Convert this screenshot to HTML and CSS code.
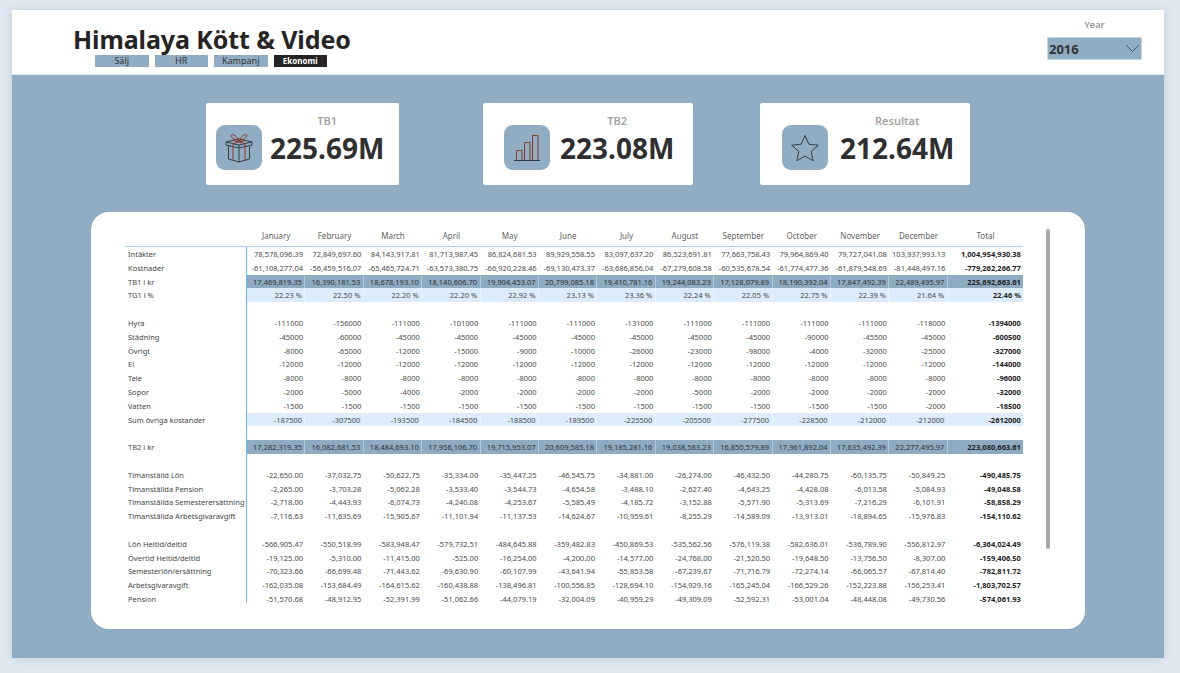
FILE: index.html
```html
<!DOCTYPE html>
<html lang="sv">
<head>
    <meta charset="UTF-8">
    <meta name="viewport" content="width=device-width, initial-scale=1.0">
    <title>Himalaya Kött &amp; Video</title>
    <link rel="stylesheet" href="styles.css">
</head>
<body>
    <div class="report">
        <header class="header">
            <div class="brand">
                <h1>Himalaya Kött &amp; Video</h1>
                <nav class="tabs">
                    <a class="tab">Sälj</a>
                    <a class="tab">HR</a>
                    <a class="tab">Kampanj</a>
                    <a class="tab active">Ekonomi</a>
                </nav>
            </div>
            <div class="slicer">
                <div class="slicer-label">Year</div>
                <div class="slicer-box">
                    <span>2016</span>
                    <svg width="15" height="9" viewBox="0 0 15 9"><path d="M1 1l6.500 6.500L14 1" fill="none" stroke="#3f5266" stroke-width="1"/></svg>
                </div>
            </div>
        </header>

        <main class="content">
            <section class="cards">
                <div class="card card-first">
                    <div class="card-icon">
                        <svg width="30" height="30" viewBox="0 0 30 30" fill="none" stroke="#333c46" stroke-width="1">
                            <path d="M2 9l13-3 13 3v3l-13 3-13-3zM2 9l13 3 13-3M15 12v3M4.500 12.500V26l10.500 3 10.500-3V12.500M15 15v14"/>
                            <path stroke="#8a3a2c" d="M9 10.500V27.500M21 10.500V27.500M9 10.500l12-3M21 10.500l-12-3M15 7.500C13 3.500 9 .5 7.500 2s2.500 5 7.500 5.500zM15 7.500c2-4 6-7 7.500-5.500s-2.500 5-7.500 5.500z"/>
                        </svg>
                    </div>
                    <div class="card-text">
                        <div class="card-label">TB1</div>
                        <div class="card-value">225.69M</div>
                    </div>
                </div>
                <div class="card card-second">
                    <div class="card-icon">
                        <svg width="30" height="30" viewBox="0 0 30 30" fill="none" stroke="#8a3a2c" stroke-width="1">
                            <path d="M4.500 27.500v-10h5.500v10M12.500 27.500v-18h5.500v18M20.500 27.500v-25h5.500v25"/>
                            <path stroke="#333c46" d="M2 27.500h26"/>
                        </svg>
                    </div>
                    <div class="card-text">
                        <div class="card-label">TB2</div>
                        <div class="card-value">223.08M</div>
                    </div>
                </div>
                <div class="card card-third">
                    <div class="card-icon">
                        <svg width="30" height="30" viewBox="0 0 30 30" fill="none" stroke="#333c46" stroke-width="1">
                            <path d="M15 2.500l3.800 8.700 9.500 1-7.100 6.300 2 9.300-8.200-4.800-8.200 4.800 2-9.300-7.100-6.300 9.500-1z"/>
                        </svg>
                    </div>
                    <div class="card-text">
                        <div class="card-label">Resultat</div>
                        <div class="card-value">212.64M</div>
                    </div>
                </div>
            </section>

            <section class="panel">
                <div class="table-clip">
                    <table class="matrix">
                        <thead>
                            <tr><th class="name"></th><th>January</th><th>February</th><th>March</th><th>April</th><th>May</th><th>June</th><th>July</th><th>August</th><th>September</th><th>October</th><th>November</th><th>December</th><th>Total</th></tr>
                        </thead>
                        <tbody>
                            <tr><td class="name">Intäkter</td><td>78,578,096.39</td><td>72,849,697.60</td><td>84,143,917.81</td><td>81,713,987.45</td><td>86,824,681.53</td><td>89,929,558.55</td><td>83,097,637.20</td><td>86,523,691.81</td><td>77,663,758.43</td><td>79,964,869.40</td><td>79,727,041.08</td><td>103,937,993.13</td><td class="total">1,004,954,930.38</td></tr>
                            <tr><td class="name">Kostnader</td><td>-61,108,277.04</td><td>-56,459,516.07</td><td>-65,465,724.71</td><td>-63,573,380.75</td><td>-66,920,228.46</td><td>-69,130,473.37</td><td>-63,686,856.04</td><td>-67,279,608.58</td><td>-60,535,678.54</td><td>-61,774,477.36</td><td>-61,879,548.69</td><td>-81,448,497.16</td><td class="total">-779,262,266.77</td></tr>
                            <tr class="dark"><td class="name">TB1 i kr</td><td>17,469,819.35</td><td>16,390,181.53</td><td>18,678,193.10</td><td>18,140,606.70</td><td>19,904,453.07</td><td>20,799,085.18</td><td>19,410,781.16</td><td>19,244,083.23</td><td>17,128,079.89</td><td>18,190,392.04</td><td>17,847,492.39</td><td>22,489,495.97</td><td class="total">225,692,663.61</td></tr>
                            <tr class="light"><td class="name">TG1 i %</td><td>22.23 %</td><td>22.50 %</td><td>22.20 %</td><td>22.20 %</td><td>22.92 %</td><td>23.13 %</td><td>23.36 %</td><td>22.24 %</td><td>22.05 %</td><td>22.75 %</td><td>22.39 %</td><td>21.64 %</td><td class="total">22.46 %</td></tr>
                            <tr class="blank"><td class="name"></td><td colspan="13"></td></tr>
                            <tr><td class="name">Hyra</td><td>-111000</td><td>-156000</td><td>-111000</td><td>-101000</td><td>-111000</td><td>-111000</td><td>-131000</td><td>-111000</td><td>-111000</td><td>-111000</td><td>-111000</td><td>-118000</td><td class="total">-1394000</td></tr>
                            <tr><td class="name">Städning</td><td>-45000</td><td>-60000</td><td>-45000</td><td>-45000</td><td>-45000</td><td>-45000</td><td>-45000</td><td>-45000</td><td>-45000</td><td>-90000</td><td>-45500</td><td>-45000</td><td class="total">-600500</td></tr>
                            <tr><td class="name">Övrigt</td><td>-8000</td><td>-65000</td><td>-12000</td><td>-15000</td><td>-9000</td><td>-10000</td><td>-26000</td><td>-23000</td><td>-98000</td><td>-4000</td><td>-32000</td><td>-25000</td><td class="total">-327000</td></tr>
                            <tr><td class="name">El</td><td>-12000</td><td>-12000</td><td>-12000</td><td>-12000</td><td>-12000</td><td>-12000</td><td>-12000</td><td>-12000</td><td>-12000</td><td>-12000</td><td>-12000</td><td>-12000</td><td class="total">-144000</td></tr>
                            <tr><td class="name">Tele</td><td>-8000</td><td>-8000</td><td>-8000</td><td>-8000</td><td>-8000</td><td>-8000</td><td>-8000</td><td>-8000</td><td>-8000</td><td>-8000</td><td>-8000</td><td>-8000</td><td class="total">-96000</td></tr>
                            <tr><td class="name">Sopor</td><td>-2000</td><td>-5000</td><td>-4000</td><td>-2000</td><td>-2000</td><td>-2000</td><td>-2000</td><td>-5000</td><td>-2000</td><td>-2000</td><td>-2000</td><td>-2000</td><td class="total">-32000</td></tr>
                            <tr><td class="name">Vatten</td><td>-1500</td><td>-1500</td><td>-1500</td><td>-1500</td><td>-1500</td><td>-1500</td><td>-1500</td><td>-1500</td><td>-1500</td><td>-1500</td><td>-1500</td><td>-2000</td><td class="total">-18500</td></tr>
                            <tr class="light"><td class="name">Sum övriga kostander</td><td>-187500</td><td>-307500</td><td>-193500</td><td>-184500</td><td>-188500</td><td>-189500</td><td>-225500</td><td>-205500</td><td>-277500</td><td>-228500</td><td>-212000</td><td>-212000</td><td class="total">-2612000</td></tr>
                            <tr class="blank"><td class="name"></td><td colspan="13"></td></tr>
                            <tr class="dark"><td class="name">TB2 i kr</td><td>17,282,319.35</td><td>16,082,681.53</td><td>18,484,693.10</td><td>17,956,106.70</td><td>19,715,953.07</td><td>20,609,585.18</td><td>19,185,281.16</td><td>19,038,583.23</td><td>16,850,579.89</td><td>17,961,892.04</td><td>17,635,492.39</td><td>22,277,495.97</td><td class="total">223,080,663.61</td></tr>
                            <tr class="blank"><td class="name"></td><td colspan="13"></td></tr>
                            <tr><td class="name">Timanställd Lön</td><td>-22,650.00</td><td>-37,032.75</td><td>-50,622.75</td><td>-35,334.00</td><td>-35,447.25</td><td>-46,545.75</td><td>-34,881.00</td><td>-26,274.00</td><td>-46,432.50</td><td>-44,280.75</td><td>-60,135.75</td><td>-50,849.25</td><td class="total">-490,485.75</td></tr>
                            <tr><td class="name">Timanställda Pension</td><td>-2,265.00</td><td>-3,703.28</td><td>-5,062.28</td><td>-3,533.40</td><td>-3,544.73</td><td>-4,654.58</td><td>-3,488.10</td><td>-2,627.40</td><td>-4,643.25</td><td>-4,428.08</td><td>-6,013.58</td><td>-5,084.93</td><td class="total">-49,048.58</td></tr>
                            <tr><td class="name">Timanställda Semesterersättning</td><td>-2,718.00</td><td>-4,443.93</td><td>-6,074.73</td><td>-4,240.08</td><td>-4,253.67</td><td>-5,585.49</td><td>-4,185.72</td><td>-3,152.88</td><td>-5,571.90</td><td>-5,313.69</td><td>-7,216.29</td><td>-6,101.91</td><td class="total">-58,858.29</td></tr>
                            <tr><td class="name">Timanställda Arbetsgivaravgift</td><td>-7,116.63</td><td>-11,635.69</td><td>-15,905.67</td><td>-11,101.94</td><td>-11,137.53</td><td>-14,624.67</td><td>-10,959.61</td><td>-8,255.29</td><td>-14,589.09</td><td>-13,913.01</td><td>-18,894.65</td><td>-15,976.83</td><td class="total">-154,110.62</td></tr>
                            <tr class="blank"><td class="name"></td><td colspan="13"></td></tr>
                            <tr><td class="name">Lön Heltid/deltid</td><td>-566,905.47</td><td>-550,518.99</td><td>-583,948.47</td><td>-579,732.51</td><td>-484,645.88</td><td>-359,482.83</td><td>-450,869.53</td><td>-535,562.56</td><td>-576,119.38</td><td>-582,636.01</td><td>-536,789.90</td><td>-556,812.97</td><td class="total">-6,364,024.49</td></tr>
                            <tr><td class="name">Övertid Heltid/deltid</td><td>-19,125.00</td><td>-5,310.00</td><td>-11,415.00</td><td>-525.00</td><td>-16,254.00</td><td>-4,200.00</td><td>-14,577.00</td><td>-24,768.00</td><td>-21,520.50</td><td>-19,648.50</td><td>-13,756.50</td><td>-8,307.00</td><td class="total">-159,406.50</td></tr>
                            <tr><td class="name">Semesterlön/ersättning</td><td>-70,323.66</td><td>-66,699.48</td><td>-71,443.62</td><td>-69,630.90</td><td>-60,107.99</td><td>-43,641.94</td><td>-55,853.58</td><td>-67,239.67</td><td>-71,716.79</td><td>-72,274.14</td><td>-66,065.57</td><td>-67,814.40</td><td class="total">-782,811.72</td></tr>
                            <tr><td class="name">Arbetsgivaravgift</td><td>-162,035.08</td><td>-153,684.49</td><td>-164,615.62</td><td>-160,438.88</td><td>-138,496.81</td><td>-100,556.85</td><td>-128,694.10</td><td>-154,929.16</td><td>-165,245.04</td><td>-166,529.26</td><td>-152,223.88</td><td>-156,253.41</td><td class="total">-1,803,702.57</td></tr>
                            <tr><td class="name">Pension</td><td>-51,570.68</td><td>-48,912.95</td><td>-52,391.99</td><td>-51,062.66</td><td>-44,079.19</td><td>-32,004.09</td><td>-40,959.29</td><td>-49,309.09</td><td>-52,592.31</td><td>-53,001.04</td><td>-48,448.08</td><td>-49,730.56</td><td class="total">-574,061.93</td></tr>
                        </tbody>
                    </table>
                </div>
                <div class="scrollbar"></div>
            </section>
        </main>
    </div>
</body>
</html>
```

FILE: styles.css
```css
body {
    margin: 0;
    height: 673px;
    overflow: hidden;
    padding: 10px 16px 0 12px;
    box-sizing: border-box;
    background-color: #e0e9f2;
    font-family: "Noto Sans", "Open Sans", sans-serif;
    color: #2f2f2f;
}
.report {
    height: 648px;
    display: flex;
    flex-direction: column;
    box-shadow: 0 0 10px rgba(0, 0, 0, 0.12);
}

/* top bar */
.header {
    height: 65px;
    flex: none;
    box-sizing: border-box;
    background: white;
    border-bottom: 1px solid #e6edf3;
    display: flex;
    justify-content: space-between;
    padding: 13px 22px 0 61px;
}
h1 {
    margin: 0;
    font-size: 25px;
    line-height: 32px;
    letter-spacing: -0.1px;
    font-weight: 700;
    color: #252423;
}
.tabs {
    display: flex;
    gap: 6px;
    margin: 0 0 0 22px;
}
.tab {
    width: 53.500px;
    height: 12px;
    line-height: 12px;
    text-align: center;
    font-size: 9px;
    background-color: #90adc4;
    color: #333;
}
.tab.active {
    background-color: #252423;
    color: white;
    font-size: 8px;
    font-weight: 700;
}
.slicer {
    width: 95px;
}
.slicer-label {
    text-align: center;
    font-size: 9.500px;
    font-weight: 600;
    line-height: 12px;
    color: #999;
    margin: -4px 0 6px;
}
.slicer-box {
    height: 23px;
    box-sizing: border-box;
    background-color: #90adc4;
    border: 1px solid #c8d6e2;
    display: flex;
    align-items: center;
    justify-content: space-between;
    padding: 0 1px 0 1px;
    font-size: 13px;
    font-weight: 700;
    color: #333;
}

/* blue area */
.content {
    flex: 1;
    background-color: #90adc4;
    padding: 28px 79px 29px 79px;
    display: flex;
    flex-direction: column;
    gap: 27px;
}
.cards {
    display: flex;
    height: 82px;
    margin-left: 115px;
}
.card {
    background: white;
    border-radius: 2px;
    display: flex;
    align-items: flex-end;
    gap: 8px;
    box-sizing: border-box;
    padding-bottom: 15px;
}
.card-first {
    width: 193px;
    padding-left: 10px;
}
.card-second {
    width: 210px;
    margin-left: 84px;
    padding-left: 21px;
    gap: 10px;
}
.card-third {
    width: 210px;
    margin-left: 67px;
    padding-left: 22px;
    gap: 12px;
}
.card-icon {
    width: 46px;
    height: 45px;
    background-color: #90adc4;
    border-radius: 9px;
    display: flex;
    align-items: center;
    justify-content: center;
}
.card-text {
    display: flex;
    flex-direction: column;
    align-items: center;
}
.card-label {
    font-size: 11px;
    line-height: 14px;
    font-weight: 600;
    color: #a3a3a3;
}
.card-value {
    font-size: 28px;
    line-height: 40px;
    margin-bottom: 2px;
    font-weight: 700;
    color: #2f2f2f;
}

/* table panel */
.panel {
    position: relative;
    flex: 1;
    background: white;
    border-radius: 18px;
    padding: 18px 0 0 34px;
}
.table-clip {
    width: 900px;
    height: 373px;
    overflow: hidden;
}
.matrix {
    table-layout: fixed;
    width: 898.300px;
    border-collapse: separate;
    border-spacing: 0;
    font-size: 7.500px;
    color: #4a4a4a;
}
.matrix th, .matrix td {
    width: 58.400px;
    padding: 0;
    box-sizing: border-box;
}
.matrix th {
    height: 17px;
    font-weight: 400;
    font-size: 8px;
    line-height: 11px;
    color: #5f5f5f;
    text-align: center;
    vertical-align: top;
    border-bottom: 1px solid #a9d0f3;
    padding-top: 0;
}
.matrix th:last-child, .matrix td.total {
    width: 75.500px;
}
.matrix th.name, .matrix td.name {
    width: 122px;
}
.matrix td {
    height: 13.800px;
    line-height: 12.800px;
    padding-top: 1px;
    text-align: right;
    padding-right: 2.400px;
    white-space: nowrap;
}
.matrix td.name {
    text-align: left;
    padding: 1px 0 0 3px;
    border-right: 1px solid #6fb6f3;
    color: #444;
}
.matrix td.total {
    font-weight: 700;
    color: #222;
}
.dark td:not(.name) {
    background-color: #8fabc2;
    border-right: 1px solid #b5c8d7;
    color: #303030;
}
.light td:not(.name) {
    background-color: #dcecfd;
    border-right: 1px solid #eaf3fd;
}
.matrix .dark td.total, .matrix .light td.total {
    border-right: none;
    color: #222;
}
.scrollbar {
    position: absolute;
    left: 955px;
    top: 17px;
    width: 4px;
    height: 320px;
    background-color: #a9a9a9;
    border-radius: 2px;
}
```
